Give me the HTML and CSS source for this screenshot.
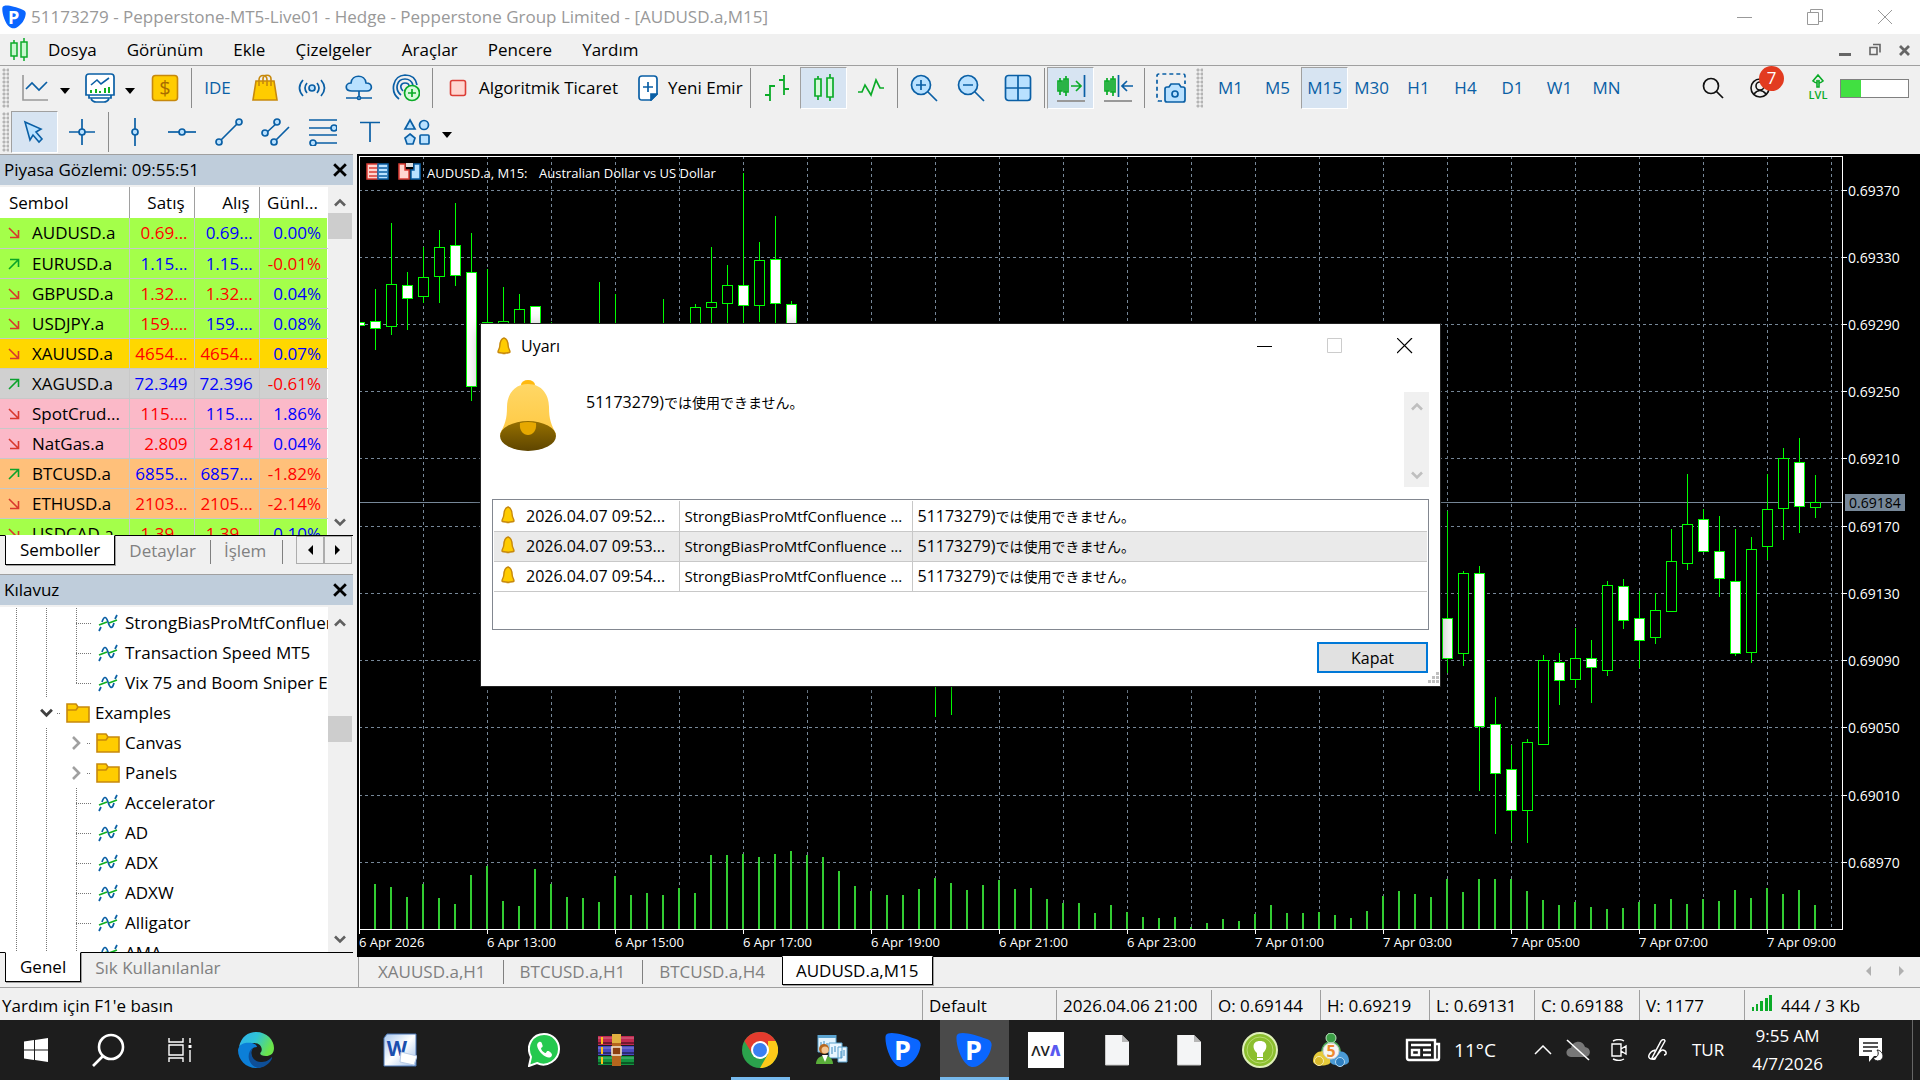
FILE: index.html
```html
<!DOCTYPE html>
<html lang="tr">
  <head>
    <meta charset="UTF-8" />
    <meta name="viewport" content="width=device-width, initial-scale=1.0" />
    <title>51173279 - Pepperstone-MT5-Live01</title>
    <link rel="stylesheet" href="styles.css" />
  </head>
  <body>
    <!-- Shared icons -->
    <svg class="defs" aria-hidden="true">
      <defs>
        <linearGradient id="bellBody" x1="0" y1="0" x2="0" y2="1">
          <stop offset="0" stop-color="#ffd766" />
          <stop offset="1" stop-color="#ffc63a" />
        </linearGradient>
        <linearGradient id="bellMouth" x1="0" y1="0" x2="0" y2="1">
          <stop offset="0" stop-color="#967000" />
          <stop offset="1" stop-color="#5e4500" />
        </linearGradient>
        <linearGradient id="edgeTop" x1="0" y1="0" x2="1" y2="0.4">
          <stop offset="0" stop-color="#2fb0ee" />
          <stop offset="0.5" stop-color="#2fc4d8" />
          <stop offset="1" stop-color="#6be44a" />
        </linearGradient>
        <linearGradient id="wordBg" x1="0" y1="0" x2="1" y2="1">
          <stop offset="0" stop-color="#a9c8ee" />
          <stop offset="0.5" stop-color="#ffffff" />
          <stop offset="1" stop-color="#9dbde8" />
        </linearGradient>
        <symbol id="pepper" viewBox="0 0 36 36">
          <path d="M3 1.500C8-.5 20 3 31 7c4 1.500 5 4 4.500 7-1 8-6 16-14 20-3 1.500-7 1.500-10-1C4 27 0 12 .5 5c0-2 1-3 2.500-3.500z" fill="#0a66ff" />
          <text x="9" y="28" class="logo-letter">P</text>
        </symbol>
        <symbol id="bell" viewBox="0 0 14 18">
          <path d="M7 1C3.500 2 3 5 2.800 9 2.600 12 1 13 1 15c1 1.500 11 1.500 12 0 0-2-1.600-3-1.800-6C11 5 10.500 2 7 1zM5.500 16.500h3" fill="#fc0" stroke="#c7890c" stroke-width="1.400" />
        </symbol>
        <symbol id="down" viewBox="0 0 12 12">
          <path d="M1 1l9 9M10.500 3v7.500H2" fill="none" stroke="#d9372c" stroke-width="1.600" />
        </symbol>
        <symbol id="up" viewBox="0 0 12 12">
          <path d="M1 11l9-9M2 1.500h8.500V9" fill="none" stroke="#0ba32a" stroke-width="1.600" />
        </symbol>
        <symbol id="caret" viewBox="0 0 10 6"><path d="M0 0h10L5 6z" /></symbol>
        <symbol id="chev-up" viewBox="0 0 12 9"><path d="M1 7.500l5-5 5 5" fill="none" stroke="currentColor" stroke-width="2.600" /></symbol>
        <symbol id="chev-down" viewBox="0 0 12 9"><path d="M1 1.500l5 5 5-5" fill="none" stroke="currentColor" stroke-width="2.600" /></symbol>
        <symbol id="cross" viewBox="0 0 12 12"><path d="M1 1l10 10M11 1L1 11" fill="none" stroke="currentColor" stroke-width="2.400" /></symbol>
        <symbol id="folder" viewBox="0 0 24 20">
          <path d="M1 1h9l2 3h11v15H1z" fill="#fc0" stroke="#c7890c" stroke-width="1.600" />
          <path d="M1 7h9l2-3" fill="none" stroke="#c7890c" stroke-width="1.600" />
        </symbol>
        <symbol id="indicator" viewBox="0 0 20 18">
          <path d="M1 17l2-4M4 8c2-6 4-6 6 0s4 8 6 1M17 5l2-4" fill="none" stroke="#0a5fa5" stroke-width="1.700" />
          <path d="M1 11l8-3M11 9l8-3" stroke="#10b020" stroke-width="1.700" />
        </symbol>
        <symbol id="page" viewBox="0 0 24 32">
          <path d="M0 1h17l7 7v23H0z" fill="#f4f5f6" />
          <path d="M17 1l7 7h-7z" fill="#b6b6b6" />
          <path d="M.5 1v30h23" fill="none" stroke="#c9c9c9" />
        </symbol>
      </defs>
    </svg>

    <!-- Title bar -->
    <header class="titlebar">
      <svg class="i24" width="24" height="24"><use href="#pepper" /></svg>
      <span class="title">51173279 - Pepperstone-MT5-Live01 - Hedge - Pepperstone Group Limited - [AUDUSD.a,M15]</span>
      <button class="win-btn" aria-label="Minimize"><svg width="16" height="16"><path d="M0 8.500h15" stroke="#999" /></svg></button>
      <button class="win-btn" aria-label="Restore"><svg width="16" height="16" fill="none" stroke="#999"><path d="M.5 3.500h11v12H.5zM3.500 3V.5h12v12H12" /></svg></button>
      <button class="win-btn" aria-label="Close"><svg width="16" height="16"><path d="M1 1l14 14M15 1L1 15" stroke="#999" /></svg></button>
    </header>

    <nav class="menubar">
      <svg width="18" height="24" fill="#c9f7cf" stroke="#0bab28" stroke-width="1.500"><path d="M4 2v20M14 0v23" /><path d="M1 5h6v13H1zM11 4h6v15h-6z" /></svg>
      <a href="#">Dosya</a>
      <a href="#">Görünüm</a>
      <a href="#">Ekle</a>
      <a href="#">Çizelgeler</a>
      <a href="#">Araçlar</a>
      <a href="#">Pencere</a>
      <a href="#">Yardım</a>
      <span class="mdi">
        <button aria-label="Minimize chart"><svg width="14" height="14"><path d="M1 11.500h12" stroke="#666" stroke-width="3" /></svg></button>
        <button aria-label="Restore chart"><svg width="14" height="14" fill="none" stroke="#666" stroke-width="1.600"><path d="M2 4.500h7v7H2zM5 1.500h7v8" /></svg></button>
        <button aria-label="Close chart"><svg width="14" height="14"><path d="M2 3l9 9M11 3l-9 9" stroke="#666" stroke-width="2.800" /></svg></button>
      </span>
    </nav>

    <!-- Toolbars -->
    <div class="toolbar">
      <span class="grip"></span>
      <button class="tool" aria-label="Line chart"><svg width="28" height="28" fill="none"><path d="M2 1v25h25" stroke="#999" stroke-width="1.600" /><path d="M5 15l6-6 7 7 8-8" stroke="#0a5fa5" stroke-width="1.700" /></svg></button>
      <button class="drop" aria-label="Chart menu"><svg width="10" height="6"><use href="#caret" /></svg></button>
      <button class="tool" aria-label="Indicators"><svg width="30" height="30" fill="none"><path d="M1 4q0-3 3-3h22q3 0 3 3v18H1zM4 22v3h22v-3M6 26q2 3 5 3h8q3 0 5-3" stroke="#0a5fa5" stroke-width="1.700" fill="#fff" /><path d="M6 12l6-5 4 4 8-6" stroke="#0a5fa5" stroke-width="1.600" /><path d="M6 20v-3M11 20v-4M15 20v-2M20 20v-5M24 20v-6" stroke="#10b020" stroke-width="2" /></svg></button>
      <button class="drop" aria-label="Indicator menu"><svg width="10" height="6"><use href="#caret" /></svg></button>
      <button class="tool" aria-label="Trade"><svg width="28" height="28"><rect x="1.500" y="1.500" width="25" height="25" rx="3" fill="#fc0" stroke="#c7890c" stroke-width="1.600" /><text x="14" y="21" text-anchor="middle" class="dollar">$</text></svg></button>
      <span class="sep"></span>
      <button class="tool ide">IDE</button>
      <button class="tool" aria-label="Market"><svg width="26" height="28" stroke="#c7890c" stroke-width="1.600"><path d="M4 7h18l3 19H1z" fill="#fc0" /><path d="M7 12V6c0-6 8-6 8 0v6M11 10V5c0-5 8-5 8 0v7" fill="none" /></svg></button>
      <button class="tool" aria-label="Signals"><svg width="28" height="20" fill="none" stroke="#0a5fa5" stroke-width="1.700"><circle cx="14" cy="10" r="3" fill="#b9e1ff" /><path d="M9 5q-4 5 0 10M5 2q-7 8 0 16M19 5q4 5 0 10M23 2q7 8 0 16" /></svg></button>
      <button class="tool" aria-label="VPS"><svg width="28" height="26" stroke="#0a5fa5" stroke-width="1.700"><path d="M7 16c-8 0-7-8-1-8C7-1 20-1 21 8c7 0 7 8 1 8z" fill="#b9e1ff" /><path d="M14 16v6M1 23h26" /><circle cx="14" cy="23" r="1.500" fill="#b9e1ff" /></svg></button>
      <button class="tool" aria-label="Copy trading"><svg width="28" height="28" fill="none" stroke="#0a5fa5" stroke-width="1.700"><path d="M7 25C-2 18 0 2 13 1c7 0 11 4 12 10M9 21C2 15 5 5 13 5c5 0 7 3 8 6M11 17C7 13 9 9 13 9c2 0 4 1 4 3" /><circle cx="20" cy="19" r="7.500" fill="#d7fadb" stroke="#0bab28" /><path d="M20 15v8M16 19h8" stroke="#0bab28" /></svg></button>
      <span class="sep"></span>
      <button class="text-tool algo"><svg width="18" height="18"><rect x="1.500" y="1.500" width="15" height="15" rx="2" fill="#ffd6d0" stroke="#dc3d35" stroke-width="1.600" /></svg>Algoritmik Ticaret</button>
      <button class="text-tool order"><svg width="20" height="26" stroke="#0a5fa5" stroke-width="1.700"><path d="M1 4q0-3 3-3h12q3 0 3 3v15l-6 6H4q-3 0-3-3z" fill="#fff" /><path d="M13 25v-6h6z" fill="#0a5fa5" /><path d="M10 7v10M5 12h10" /></svg>Yeni Emir</button>
      <span class="sep"></span>
      <button class="tool" aria-label="Bars"><svg width="28" height="28" fill="none" stroke="#0bab28" stroke-width="1.800"><path d="M7 11v16M2 21h5M7 12h5M21 1v20M16 6h5M21 15h5" /></svg></button>
      <button class="tool on" aria-label="Candles"><svg width="24" height="28" fill="#d7fadb" stroke="#0bab28" stroke-width="1.700"><path d="M6 2v24M18 0v27" /><path d="M3 5h6v17H3zM15 4h6v19h-6z" /></svg></button>
      <button class="tool" aria-label="Line"><svg width="28" height="20" fill="none" stroke="#0bab28" stroke-width="1.700"><path d="M1 14h4l3-7 6 10 5-15 4 8h4" /></svg></button>
      <span class="sep"></span>
      <button class="tool" aria-label="Zoom in"><svg width="28" height="28" stroke="#0a5fa5" stroke-width="1.700"><circle cx="11" cy="11" r="9.500" fill="#b9e1ff" /><path d="M11 6v10M6 11h10M18 18l9 9" /></svg></button>
      <button class="tool" aria-label="Zoom out"><svg width="28" height="28" stroke="#0a5fa5" stroke-width="1.700"><circle cx="11" cy="11" r="9.500" fill="#b9e1ff" /><path d="M6 11h10M18 18l9 9" /></svg></button>
      <button class="tool" aria-label="Tile windows"><svg width="28" height="28" stroke="#0a5fa5" stroke-width="1.700"><rect x="1.500" y="1.500" width="25" height="25" rx="3" fill="#b9e1ff" /><path d="M14 1v26M1 14h26" /></svg></button>
      <span class="sep"></span>
      <button class="tool on" aria-label="Auto scroll"><svg width="30" height="28" fill="none" stroke-width="1.700"><path d="M4 4v17M10 2v20M2 7h4v10H2zM8 5h4v13H8zM15 12h9M20 7l5 5-5 5" stroke="#0bab28" /><path d="M28.500 1v22" stroke="#0a5fa5" /><path d="M1 27h28" stroke="#999" stroke-width="2" /></svg></button>
      <button class="tool" aria-label="Chart shift"><svg width="30" height="28" fill="none" stroke-width="1.700"><path d="M4 4v17M10 2v20M2 7h4v10H2zM8 5h4v13H8z" stroke="#0bab28" /><path d="M15.500 1v22M19 12h11M24 7l-5 5 5 5" stroke="#0a5fa5" /><path d="M1 27h28" stroke="#999" stroke-width="2" /></svg></button>
      <span class="sep"></span>
      <button class="tool" aria-label="Screenshot"><svg width="30" height="30" fill="none" stroke="#0a5fa5" stroke-width="1.700"><path d="M6 28H3q-2 0-2-2V3q0-2 2-2h24q2 0 2 2v8" stroke-dasharray="4 3" /><path d="M9 16q0-2 2-2h2l2-3h8l2 3h2q2 0 2 2v11q0 2-2 2H11q-2 0-2-2z" fill="#b9e1ff" /><circle cx="19" cy="21" r="3" /></svg></button>
      <span class="grip"></span>
      <button class="tool period">M1</button>
      <button class="tool period">M5</button>
      <button class="tool period on">M15</button>
      <button class="tool period">M30</button>
      <button class="tool period">H1</button>
      <button class="tool period">H4</button>
      <button class="tool period">D1</button>
      <button class="tool period">W1</button>
      <button class="tool period">MN</button>
      <div class="account">
        <button aria-label="Search"><svg width="22" height="22" fill="none" stroke="#111" stroke-width="1.700"><circle cx="9" cy="9" r="7.500" /><path d="M14 14l7 7" /></svg></button>
        <button class="user" aria-label="Account"><svg width="20" height="20" fill="none" stroke="#111" stroke-width="1.600"><circle cx="10" cy="10" r="9" /><circle cx="10" cy="8" r="4" /><path d="M4 16q6-7 12 0" /></svg><span class="badge">7</span></button>
        <svg class="lvl" width="26" height="30"><path d="M13 2l5 6q-5 4-4-1v7h-2V7q1 5-4 1z" fill="none" stroke="#0bab28" stroke-width="1.600" /><text x="13" y="26" text-anchor="middle">LVL</text></svg>
        <span class="meter"><span></span></span>
      </div>
    </div>
    <div class="toolbar">
      <span class="grip"></span>
      <button class="tool on" aria-label="Cursor"><svg width="24" height="24" fill="#b9e1ff" stroke="#0a5fa5" stroke-width="1.600"><path d="M2 2l16 7-5 3 6 7-3 3-6-7-3 5z" /></svg></button>
      <button class="tool" aria-label="Crosshair"><svg width="26" height="26" fill="#b9e1ff" stroke="#0a5fa5" stroke-width="1.700"><path d="M13 0v26M0 13h26" /><circle cx="13" cy="13" r="3" /></svg></button>
      <span class="sep"></span>
      <button class="tool" aria-label="Vertical line"><svg width="10" height="28" fill="#b9e1ff" stroke="#0a5fa5" stroke-width="1.700"><path d="M5 0v28" /><circle cx="5" cy="14" r="3" /></svg></button>
      <button class="tool" aria-label="Horizontal line"><svg width="28" height="10" fill="#b9e1ff" stroke="#0a5fa5" stroke-width="1.700"><path d="M0 5h28" /><circle cx="14" cy="5" r="3" /></svg></button>
      <button class="tool" aria-label="Trend line"><svg width="28" height="28" fill="#b9e1ff" stroke="#0a5fa5" stroke-width="1.700"><path d="M4 24L24 4" /><circle cx="4" cy="24" r="3" /><circle cx="24" cy="4" r="3" /></svg></button>
      <button class="tool" aria-label="Channel"><svg width="30" height="28" fill="#b9e1ff" stroke="#0a5fa5" stroke-width="1.700"><path d="M4 16L17 4M13 24l15-15" /><circle cx="4" cy="15" r="3" /><circle cx="16" cy="4" r="3" /><circle cx="13" cy="24" r="3" /></svg></button>
      <button class="tool" aria-label="Fibonacci"><svg width="28" height="28" fill="#b9e1ff" stroke="#0a5fa5" stroke-width="1.700"><path d="M0 2h28M0 10h28M0 17h28M4 25h24" /><circle cx="25" cy="10" r="3" /><circle cx="4" cy="25" r="3" /></svg></button>
      <button class="tool" aria-label="Text"><svg width="20" height="22"><path d="M0 1.500h20M10 1v20" stroke="#0a5fa5" stroke-width="1.700" /></svg></button>
      <button class="tool" aria-label="Shapes"><svg width="28" height="28" fill="#b9e1ff" stroke="#0a5fa5" stroke-width="1.700"><path d="M7 2l5 9H2zM7 16l5 4-2 6H4l-2-6z" /><circle cx="21" cy="7" r="4.500" /><rect x="17" y="17" width="9" height="9" rx="1" /></svg></button>
      <button class="drop" aria-label="Shape menu"><svg width="10" height="6"><use href="#caret" /></svg></button>
    </div>

    <main class="workspace">
      <aside class="sidebar">
        <section class="panel market">
          <h2 class="panel-head">Piyasa Gözlemi: 09:55:51 <button aria-label="Close"><svg width="14" height="14"><use href="#cross" /></svg></button></h2>
          <div class="panel-body">
            <table class="quotes">
              <thead>
                <tr><th>Sembol</th><th>Satış</th><th>Alış</th><th>Günl...</th></tr>
              </thead>
              <tbody id="quotes"></tbody>
            </table>
            <div class="scroll">
              <svg width="12" height="9"><use href="#chev-up" /></svg>
              <span class="thumb"></span>
              <svg width="12" height="9"><use href="#chev-down" /></svg>
            </div>
          </div>
          <div class="tabs">
            <button class="tab active">Semboller</button>
            <button class="tab">Detaylar</button>
            <button class="tab">İşlem</button>
            <span class="tab-arrows">
              <button aria-label="Left"><svg width="6" height="10"><path d="M6 0v10L1 5z" /></svg></button>
              <button aria-label="Right"><svg width="6" height="10"><path d="M0 0v10l5-5z" /></svg></button>
            </span>
          </div>
        </section>
        <section class="panel navigator">
          <h2 class="panel-head">Kılavuz <button aria-label="Close"><svg width="14" height="14"><use href="#cross" /></svg></button></h2>
          <div class="panel-body">
            <ul class="tree" id="tree"></ul>
            <div class="scroll low">
              <svg width="12" height="9"><use href="#chev-up" /></svg>
              <span class="thumb"></span>
              <svg width="12" height="9"><use href="#chev-down" /></svg>
            </div>
          </div>
          <div class="tabs">
            <button class="tab active">Genel</button>
            <button class="tab">Sık Kullanılanlar</button>
          </div>
        </section>
      </aside>

      <section class="chart-area">
        <svg class="chart" id="chart" viewBox="357 154 1563 803" preserveAspectRatio="none"></svg>
        <div class="chart-tabs">
          <button class="ctab">XAUUSD.a,H1</button>
          <button class="ctab">BTCUSD.a,H1</button>
          <button class="ctab">BTCUSD.a,H4</button>
          <button class="ctab active">AUDUSD.a,M15</button>
          <span class="ctab-arrows">
            <svg width="6" height="10"><path d="M5 0v10L0 5z" /></svg>
            <svg width="6" height="10"><path d="M1 0v10l5-5z" /></svg>
          </span>
        </div>
      </section>
    </main>

    <footer class="status">
      <span class="help">Yardım için F1'e basın</span>
      <span class="profile">Default</span>
      <span class="time">2026.04.06 21:00</span>
      <span class="open-high">O: 0.69144</span>
      <span class="open-high">H: 0.69219</span>
      <span class="low-close">L: 0.69131</span>
      <span class="low-close">C: 0.69188</span>
      <span class="low-close">V: 1177</span>
      <span class="net"><svg width="22" height="18" fill="#0bab28"><path d="M1 13h2v4H1zM5 10h2v7H5zM9 7h3v10H9zM14 4h3v13h-3zM18 1h3v16h-3z" /></svg>444 / 3 Kb</span>
    </footer>

    <!-- Windows taskbar -->
    <div class="taskbar">
      <div class="start">
        <button aria-label="Start"><svg width="24" height="24" fill="#fff"><path d="M0 3.500L10 2v9.500H0zM11 2l13-2v11.500H11zM0 12.500h10V22L0 20.500zM11 12.500h13V24l-13-2z" /></svg></button>
        <button aria-label="Search"><svg width="34" height="34" fill="none" stroke="#fff" stroke-width="2.600"><circle cx="20" cy="14" r="12" /><path d="M12 23L2 33" /></svg></button>
        <button aria-label="Task view"><svg width="24" height="24" fill="none" stroke="#fff" stroke-width="1.400"><path d="M1 0v4h14V0M1 7h14v10H1zM1 24v-4h14v4M22 0v5M22 12v12" /><path d="M20.500 7h3v3h-3z" fill="#fff" stroke="none" /></svg></button>
      </div>
      <div class="apps">
        <button aria-label="Edge"><svg width="36" height="36"><path d="M1 15C3 5 10 0 18 0c11 0 18 8 18 16 0 6-4 8-8 8-5 0-7-2-5-4 2-3 0-9-7-9-7 0-13 2-15 4z" fill="url(#edgeTop)" /><path d="M0 18c1-7 9-8 14-7 4 1 5 3 5 4-6 0-7 6-5 10 2 6 9 11 16 5-3 4-8 6-12 6C8 36 0 28 0 18z" fill="#0c7fd8" /><path d="M16 15c-6 6-1 16 8 15 5 0 8-3 10-5 1 2-5 11-14 11-10-2-13-16-4-21z" fill="#0e4f98" /></svg></button>
        <i></i>
        <button aria-label="Word"><svg width="34" height="34"><path d="M4 1h29v32H1V5z" fill="url(#wordBg)" stroke="#4c79b8" /><text x="14" y="23" text-anchor="middle" class="word">W</text><path d="M18 19l16 4-3 9-14-3z" fill="#fff" stroke="#b8cbe6" /></svg></button>
        <i></i>
        <button aria-label="WhatsApp"><svg width="32" height="34"><path d="M1 33l2-9C-3 12 5 1 16 1c9 0 15 7 15 15 0 11-12 19-22 14z" fill="#25c94f" stroke="#fff" stroke-width="2" /><path d="M11 9c-4 2-1 8 3 12s9 5 10 1c0-2-3-4-4-4-2 0-1 2-3 2-2-1-4-3-4-5 2-1 2-2 1-4 0-1-1-3-3-2z" fill="#fff" /></svg></button>
        <button aria-label="WinRAR"><svg width="36" height="32"><path d="M0 2h36v9H0z" fill="#c0294f" /><path d="M0 12h36v9H0z" fill="#4a4ac0" /><path d="M0 22h36v9H0z" fill="#12933f" /><path d="M0 4h36M0 14h36M0 24h36" stroke="#fff" stroke-opacity=".35" /><path d="M0 9h36M0 19h36M0 29h36" stroke="#000" stroke-opacity=".4" stroke-width="2" /><path d="M3 3h2v7H3zM3 13h2v7H3zM3 23h2v7H3z" fill="#ffc21a" /><path d="M14 1h9v31h-9z" fill="#b5651d" /><path d="M14 0h9v9h-9z" fill="#e0b040" /><rect x="14" y="13" width="9" height="8" fill="#8b3f10" stroke="#f0e0c8" stroke-width="1.600" /></svg></button>
        <i></i>
        <button class="open" aria-label="Chrome"><svg width="36" height="36"><circle cx="18" cy="18" r="18" fill="#2ba24c" /><path d="M18 18L2.400 9A18 18 0 0 1 33.600 9z" fill="#e33b2e" /><path d="M2.400 9L11 23l7-14z" fill="#e33b2e" /><path d="M33.600 9A18 18 0 0 1 18 36l8-14V9z" fill="#fdc919" /><circle cx="18" cy="18" r="9" fill="#fff" /><circle cx="18" cy="18" r="7" fill="#3a7ff0" /></svg></button>
        <button aria-label="Manager"><svg width="32" height="30"><path d="M2 0h18v17H2z" fill="#e3f3fd" stroke="#5ba3cf" /><path d="M2 0h18v3H2z" fill="#5ba3cf" /><path d="M13 8h13v15H13zM22 12h9v15h-9z" fill="#eaf6ff" stroke="#5ba3cf" /><path d="M5 7v6M8 6v7M11 8v4M16 12v7M19 11v6M25 16v7M28 15v6" stroke="#3a8ac0" /><circle cx="8" cy="14" r="5" fill="#b5651d" /><circle cx="9" cy="15" r="3.500" fill="#f3c592" /><path d="M0 29c0-11 17-11 17 0z" fill="#5aae3a" /><path d="M6 20l3 7 3-7z" fill="#fff" /></svg></button>
        <button aria-label="Pepperstone"><svg width="36" height="36"><use href="#pepper" /></svg></button>
        <button class="open current" aria-label="Pepperstone MT5"><svg width="36" height="36"><use href="#pepper" /></svg></button>
        <button aria-label="AVA"><span class="ava">ΛV<b>Λ</b></span></button>
        <button aria-label="Document"><svg width="24" height="32"><use href="#page" /></svg></button>
        <button aria-label="Document 2"><svg width="24" height="32"><use href="#page" /></svg></button>
        <button aria-label="Idea"><svg width="36" height="36"><circle cx="18" cy="18" r="17" fill="#8cbf2f" stroke="#dff0b8" stroke-width="2" /><circle cx="18" cy="18" r="13" fill="none" stroke="#b9dc70" /><path d="M18 9c-9 0-7 9-3 12v4h6v-4c4-3 6-12-3-12zM15 26h6v2h-6z" fill="#fff" /></svg></button>
        <button aria-label="MetaTrader 5"><svg width="36" height="34"><path d="M8 20C8 4 28 4 28 20z" fill="#4cab55" /><circle cx="18" cy="5" r="5" fill="#3b9e45" stroke="#bfe6c2" /><path d="M0 28c0-13 18-13 18 0 0 6-18 6-18 0z" fill="#e6cb3a" /><circle cx="6" cy="28" r="4.500" fill="#d9b92c" stroke="#f6ecb0" /><path d="M17 28c0-13 19-13 19 0 0 6-19 6-19 0z" fill="#4b9bd6" /><circle cx="27" cy="29" r="4.500" fill="#2f7fc0" stroke="#b5d9f2" /><circle cx="18" cy="18" r="8" fill="#f6f6f4" stroke="#ccc" /><text x="18" y="24" text-anchor="middle" class="five">5</text></svg></button>
      </div>
      <div class="tray">
        <span class="weather"><svg width="36" height="24" fill="none" stroke="#fff" stroke-width="2.400"><path d="M2 2h28v18q0 2 2 2H4q-2 0-2-2zM30 6h4v14q0 2-2 2" /><path d="M6 7h20M18 12h8M18 17h8M7 12h7v5H7z" /></svg>11°C</span>
        <svg class="more" width="18" height="10"><path d="M1 9l8-8 8 8" fill="none" stroke="#fff" stroke-width="1.500" /></svg>
        <svg width="24" height="22"><path d="M5 18c-7-1-5-9 0-9C7 1 17 1 19 8c7 1 6 10 0 10z" fill="#777" /><path d="M1 1l22 20" stroke="#fff" stroke-width="1.600" /></svg>
        <svg width="18" height="22" fill="none" stroke="#fff" stroke-width="1.400"><path d="M2 5h9v12H2zM11 10l5-3v8l-5-3M3 2q6-3 11 0M3 20q6 3 11 0" /></svg>
        <svg width="20" height="22" fill="none" stroke="#fff" stroke-width="1.500"><path d="M13 2q3-3 4 0L7 20q-3 1-3-1zM9 11c-7 0-11 8-6 9 6 1 8-10 12-9s4 5 1 5" /></svg>
        <span class="lang">TUR</span>
        <time>9:55 AM<br />4/7/2026</time>
        <svg class="note" width="26" height="26"><path d="M1 1h23v18h-8l-5 6v-6H1z" fill="#fff" /><path d="M5 6h15M5 10h15M5 14h9" stroke="#1d1d1d" stroke-width="1.400" /><path d="M19 13c3 4 0 8-4 8 3 5 10 3 10-2 0-3-3-6-6-6z" fill="#fff" stroke="#1d1d1d" /></svg>
      </div>
    </div>

    <!-- Alert window -->
    <div class="alert" role="dialog" aria-label="Uyarı">
      <div class="alert-title">
        <svg width="14" height="18"><use href="#bell" /></svg>
        <span>Uyarı</span>
        <button aria-label="Minimize"><svg width="16" height="16"><path d="M0 8.500h15" stroke="#000" /></svg></button>
        <button aria-label="Maximize" disabled><svg width="16" height="16"><path d="M.5.5h14v14H.5z" fill="none" stroke="#ccc" /></svg></button>
        <button aria-label="Close"><svg width="16" height="16"><path d="M0 0l15 15M15 0L0 15" stroke="#000" stroke-width="1.200" /></svg></button>
      </div>
      <div class="alert-message">
        <svg width="56" height="72">
          <ellipse cx="28" cy="5" rx="7" ry="5" fill="#ffb90f" />
          <path d="M28 4C14 4 7 15 7 27c0 12-2 17-7 27 10 16 46 16 56 0-5-10-7-15-7-27C49 15 42 4 28 4z" fill="url(#bellBody)" />
          <ellipse cx="28" cy="56" rx="28" ry="15" fill="url(#bellMouth)" />
          <path d="M20 43q8-2 16 0c2 16-18 16-16 0z" fill="#e6a800" />
        </svg>
        <p>51173279)<span class="jp">では使用できません。</span></p>
        <div class="scroll idle">
          <svg width="12" height="9"><use href="#chev-up" /></svg>
          <svg width="12" height="9"><use href="#chev-down" /></svg>
        </div>
      </div>
      <div class="alert-list">
        <table>
          <tr>
            <td><svg width="14" height="18"><use href="#bell" /></svg>2026.04.07 09:52...</td>
            <td>StrongBiasProMtfConfluence ...</td>
            <td>51173279)<span class="jp">では使用できません。</span></td>
          </tr>
          <tr>
            <td><svg width="14" height="18"><use href="#bell" /></svg>2026.04.07 09:53...</td>
            <td>StrongBiasProMtfConfluence ...</td>
            <td>51173279)<span class="jp">では使用できません。</span></td>
          </tr>
          <tr>
            <td><svg width="14" height="18"><use href="#bell" /></svg>2026.04.07 09:54...</td>
            <td>StrongBiasProMtfConfluence ...</td>
            <td>51173279)<span class="jp">では使用できません。</span></td>
          </tr>
        </table>
      </div>
      <div class="alert-foot">
        <button class="close-btn">Kapat</button>
        <svg width="12" height="12" fill="#bfbfbf"><path d="M8 0h3v3H8zM4 4h3v3H4zM8 4h3v3H8zM0 8h3v3H0zM4 8h3v3H4zM8 8h3v3H8z" /></svg>
      </div>
    </div>

    <script src="script.js"></script>
  </body>
</html>
```

FILE: styles.css
```css
* {
  box-sizing: border-box;
}

body {
  margin: 0;
  height: 100vh;
  display: flex;
  flex-direction: column;
  overflow: hidden;
  position: relative;
  background: #f0f0f0;
  color: #000;
  font-family: "Open Sans", "Noto Sans", "Noto Sans CJK JP", sans-serif;
  font-size: 17px;
  line-height: 24px;
}

button {
  padding: 0;
  border: none;
  background: none;
  font: inherit;
  color: inherit;
}

svg {
  display: block;
  flex: none;
}

.defs {
  position: absolute;
  width: 0;
  height: 0;
}

.logo-letter {
  font: bold 27px "Open Sans", sans-serif;
  fill: #fff;
}

/* Title and menu */
.titlebar {
  display: flex;
  align-items: center;
  height: 34px;
  padding-left: 2px;
  background: #fff;
  color: #999;
}

.title {
  flex: 1;
  margin-left: 5px;
  white-space: nowrap;
}

.win-btn {
  width: 70px;
  display: flex;
  justify-content: center;
}

.menubar {
  display: flex;
  align-items: center;
  height: 32px;
  padding-left: 10px;
  border-bottom: 1px solid #a0a0a0;
}

.menubar a {
  margin-left: 30px;
  color: #000;
  text-decoration: none;
}

.menubar a:first-of-type {
  margin-left: 20px;
}

.mdi {
  margin-left: auto;
  margin-right: 8px;
  display: flex;
  gap: 16px;
}

/* Toolbars */
.toolbar {
  display: flex;
  align-items: center;
  height: 44px;
  padding: 1px 0;
}

.grip {
  width: 11px;
  height: 40px;
  background: radial-gradient(circle, #b4b4b4 1px, transparent 2px) 2px 0 / 4px 4px;
  background-clip: content-box;
  padding: 0 2px;
}

.tool + .grip {
  width: 13px;
  padding-right: 4px;
}

.tool {
  width: 47px;
  height: 42px;
  display: flex;
  align-items: center;
  justify-content: center;
  border: 1px solid transparent;
}

.tool.on {
  background: #d7e4f2;
  border-color: #a0a0a0 #fff #fff #a0a0a0;
}

.drop {
  width: 18px;
  height: 42px;
  padding: 6px 0 0 2px;
}

.sep {
  width: 6px;
  height: 40px;
  background: linear-gradient(#8c8c8c, #8c8c8c) 3px 0 / 1px 100% no-repeat;
}

.ide,
.period {
  color: #0a5fa5;
}

.dollar {
  font: 20px "Open Sans", sans-serif;
  fill: #a86c00;
}

.text-tool {
  display: flex;
  align-items: center;
  gap: 12px;
  padding-left: 14px;
  white-space: nowrap;
}

.algo {
  width: 189px;
}

.order {
  width: 123px;
  gap: 10px;
}

.account {
  margin-left: auto;
  margin-right: 11px;
  display: flex;
  align-items: center;
  gap: 26px;
}

.user {
  position: relative;
  margin-right: 9px;
}

.badge {
  position: absolute;
  left: 9px;
  top: -12px;
  width: 25px;
  height: 25px;
  border-radius: 50%;
  background: #e23b20;
  color: #fff;
  text-align: center;
}

.lvl {
  margin-right: -17px;
}

.lvl text {
  font: 600 11px "Open Sans", sans-serif;
  fill: #0bab28;
}

.meter {
  width: 69px;
  height: 19px;
  border: 1px solid #808080;
  background: #fff;
}

.meter span {
  display: block;
  width: 30%;
  height: 100%;
  background: #41e041;
}

/* Workspace */
.workspace {
  flex: 1;
  min-height: 0;
  display: flex;
}

.sidebar {
  width: 353px;
  margin-right: 4px;
  display: flex;
  flex-direction: column;
}

.panel {
  display: flex;
  flex-direction: column;
  min-height: 0;
}

.market {
  height: 420px;
}

.navigator {
  flex: 1;
}

.panel-head {
  display: flex;
  align-items: center;
  justify-content: space-between;
  height: 31px;
  margin: 0 0 2px;
  padding: 0 6px 0 4px;
  border-top: 1px solid #a0a0a0;
  background: #bfcddb;
  font-size: 17px;
  font-weight: normal;
}

.panel-body {
  flex: 1;
  min-height: 0;
  display: flex;
  overflow: hidden;
}

.quotes {
  flex: 1;
  align-self: flex-start;
  table-layout: fixed;
  border-collapse: collapse;
  background: #fff;
}

.quotes th,
.quotes td {
  height: 30px;
  padding: 1px 6px 0 5px;
  border-right: 1px solid #c8c8c8;
  border-bottom: 1px solid #c8c8c8;
  text-align: right;
  font-weight: normal;
  white-space: nowrap;
}

.quotes th {
  height: 31px;
  padding-right: 9px;
  border-right-color: #a0a0a0;
  border-bottom: none;
}

.quotes th:first-child {
  width: 129px;
  padding-left: 9px;
  text-align: left;
}

.quotes th:nth-child(2),
.quotes th:nth-child(3) {
  width: 65px;
}

.quotes th:last-child,
.quotes td:last-child {
  border-right-color: #fff;
}

.quotes .sym {
  padding: 1px 0 0;
}

.sym div {
  display: flex;
  align-items: center;
  gap: 12px;
  padding-left: 8px;
}

.green { background: #a4ff4a; }
.gold { background: #ffd700; }
.silver { background: #d0d0d0; }
.pink { background: #fbb9c8; }
.orange { background: #ffc07a; }

.dn { color: #f00; }
.hi { color: #00f; }

.scroll {
  width: 24px;
  margin-right: 1px;
  padding: 11px 0 8px;
  display: flex;
  flex-direction: column;
  align-items: center;
  justify-content: space-between;
  color: #606060;
}

.thumb {
  width: 100%;
  height: 26px;
  margin-top: 6px;
  margin-bottom: auto;
  background: #cdcdcd;
}

.scroll.low .thumb {
  margin-top: 89px;
}

.tabs {
  display: flex;
  align-items: flex-start;
  height: 39px;
  border-top: 1px solid #000;
  color: #808080;
}

.navigator .tabs {
  height: 35px;
}

.tab {
  height: 30px;
  padding: 0 14px;
}

.tab + .tab:not(:nth-child(2)),
.tab + .tab-arrows {
  background: linear-gradient(#808080, #808080) 0 4px / 1px 24px no-repeat;
}

.tab.active,
.ctab.active {
  margin: -1px 0 0 5px;
  border: 1px solid #000;
  border-top-color: #fff;
  background: #fff;
  color: #000;
  box-shadow: 1px 1px 0 #a0a0a0;
}

.tab-arrows {
  margin-left: auto;
  padding-left: 14px;
  margin-right: 1px;
  display: flex;
}

.tab-arrows button {
  width: 28px;
  height: 28px;
  display: flex;
  align-items: center;
  justify-content: center;
  border: 1px solid #adadad;
}

.tree {
  flex: 1;
  min-width: 0;
  margin: 0;
  padding: 0 0 0 1px;
  list-style: none;
  overflow: hidden;
  background: #fff;
}

.tree li {
  display: flex;
  align-items: center;
  height: 30px;
  padding-top: 1px;
  white-space: nowrap;
}

.guide {
  width: 30px;
  height: 30px;
  flex: none;
  display: flex;
  align-items: center;
  justify-content: center;
  background: repeating-linear-gradient(#777 0 1px, transparent 1px 2px) 15px 0 / 1px 100% no-repeat;
}

.guide.leaf,
.guide.last {
  background:
    repeating-linear-gradient(#777 0 1px, transparent 1px 2px) 15px 0 / 1px 100% no-repeat,
    repeating-linear-gradient(90deg, #777 0 1px, transparent 1px 2px) 15px 15px / 15px 1px no-repeat;
}

.guide.last {
  background-size: 1px 15px, 15px 1px;
}

.guide.fold {
  background: repeating-linear-gradient(90deg, #777 0 1px, transparent 1px 2px) 26px 15px / 4px 1px no-repeat;
  color: #404040;
}

.guide.closed {
  color: #a0a0a0;
}

.node-icon {
  width: 34px;
  flex: none;
  display: flex;
  justify-content: center;
}

/* Chart */
.chart-area {
  flex: 1;
  min-width: 0;
  display: flex;
  flex-direction: column;
}

.chart {
  flex: 1;
  min-height: 0;
  width: 100%;
  background: #000;
}

.chart rect,
.chart line {
  shape-rendering: crispEdges;
}

.chart text {
  font: 14px "Open Sans", "Noto Sans", sans-serif;
  fill: #fff;
}

.chart .caption {
  font-size: 13px;
}

.chart .tag {
  fill: #000;
}

.chart-tabs {
  display: flex;
  align-items: flex-start;
  height: 30px;
  margin-left: 1px;
  padding-left: 2px;
  border-left: 1px solid #a0a0a0;
  color: #808080;
}

.ctab {
  height: 29px;
  padding: 0 17px;
}

.ctab + .ctab:not(.active) {
  background: linear-gradient(#808080, #808080) 0 3px / 1px 24px no-repeat;
}

.ctab.active {
  margin: -1px 0 0;
  padding: 0 13px;
}

.ctab-arrows {
  margin: 9px 16px 0 auto;
  display: flex;
  gap: 26px;
  fill: #b0b0b0;
}

/* Status bar */
.status {
  display: flex;
  height: 33px;
  padding-top: 2px;
  border-top: 1px solid #a0a0a0;
  line-height: 32px;
}

.status span {
  padding-left: 6px;
  border-left: 1px solid #a0a0a0;
  white-space: nowrap;
}

.status .help {
  flex: 1;
  padding-left: 2px;
  border-left: none;
}

.status .profile { width: 134px; }
.status .time { width: 155px; }
.status .open-high { width: 109px; }
.status .low-close { width: 105px; }

.status .net {
  width: 176px;
  display: flex;
  gap: 8px;
}

.net svg {
  margin-top: 4px;
}

/* Taskbar */
.taskbar {
  display: flex;
  height: 60px;
  background: #1d1d1d;
  color: #fff;
}

.start {
  display: flex;
  margin-right: 4px;
}

.start button {
  width: 72px;
  display: flex;
  align-items: center;
  justify-content: center;
}

.apps {
  width: 1147px;
  display: grid;
  grid-template-columns: 1fr 73px 1fr 73px 1fr 1fr 73px repeat(9, 1fr);
}

.apps button {
  display: flex;
  align-items: center;
  justify-content: center;
}

.apps .open {
  margin: 0 6px;
  border-bottom: 3px solid #76b9ed;
  padding-top: 3px;
}

.apps .current {
  margin: 0 1px;
  background: #4a4a4a;
}

.word {
  font: bold 21px "Open Sans", sans-serif;
  fill: #1b4fae;
}

.five {
  font: bold 16px "Open Sans", sans-serif;
  fill: #ee8a2e;
}

.ava {
  width: 36px;
  height: 36px;
  background: #fff;
  color: #222;
  font-size: 15px;
  font-weight: 600;
  line-height: 36px;
}

.ava b {
  color: #5a5af0;
}

.tray {
  flex: 1;
  display: flex;
  align-items: center;
  justify-content: flex-end;
  gap: 20px;
  margin-right: 7px;
  padding-right: 28px;
  border-right: 1px solid #666;
}

.weather {
  display: flex;
  align-items: center;
  gap: 13px;
  margin-right: 18px;
  font-size: 19px;
}

.tray .more {
  margin-right: -6px;
}

.tray .lang {
  margin-left: 4px;
}

.tray time {
  margin: 0 15px 0 8px;
  line-height: 28px;
  text-align: center;
}

/* Alert window, floats above the chart */
.alert {
  position: absolute;
  left: 481px;
  top: 324px;
  width: 959px;
  height: 362px;
  display: flex;
  flex-direction: column;
  background: #fff;
  box-shadow: 0 0 0 1px #222, 0 4px 16px rgba(0, 0, 0, 0.4);
  font-size: 16px;
}

.alert-title {
  display: flex;
  align-items: center;
  height: 44px;
  padding-left: 16px;
}

.alert-title span {
  flex: 1;
  margin-left: 10px;
}

.alert-title button {
  width: 70px;
  display: flex;
  justify-content: center;
}

.alert-message {
  display: flex;
  height: 131px;
  padding: 12px 11px 0 19px;
}

.alert-message p {
  flex: 1;
  margin: 10px 0 0 30px;
}

.jp {
  font-family: "Noto Sans CJK JP", sans-serif;
  font-size: 14px;
  line-height: 20px;
}

.scroll.idle {
  width: 25px;
  height: 95px;
  margin: 12px 0 0;
  padding: 10px 0 7px;
  background: #f0f0f0;
  color: #bfbfbf;
}

.alert-list {
  height: 131px;
  margin: 0 11px;
  padding: 1px;
  border: 1px solid #828790;
}

.alert-list table {
  width: 100%;
  table-layout: fixed;
  border-collapse: collapse;
}

.alert-list td {
  height: 30px;
  padding: 0 5px;
  border-bottom: 1px solid #c8c8c8;
  border-right: 1px solid #c8c8c8;
  white-space: nowrap;
}

.alert-list td:first-child {
  width: 185px;
  padding-left: 7px;
}

.alert-list td:nth-child(2) {
  width: 233px;
  font-size: 15px;
}

.alert-list td:last-child {
  border-right: none;
}

.alert-list td svg {
  float: left;
  margin: 2px 11px 0 0;
}

.alert-list tr:nth-child(2) {
  background: #eaeaea;
}

.alert-foot {
  flex: 1;
  display: flex;
  align-items: flex-end;
  justify-content: flex-end;
  padding-bottom: 2px;
}

.close-btn {
  width: 111px;
  height: 31px;
  margin-bottom: 11px;
  border: 2px solid #0078d7;
  background: #e1e1e1;
}
```

FILE: script.js
```js
const svg = (id, w, h) => `<svg width="${w}" height="${h}"><use href="#${id}" /></svg>`;

// Market watch rows: symbol, direction, row color, bid, ask, daily change
const quotes = [
  ["AUDUSD.a", "down", "green", "0.69...", "0.69...", "0.00%", "dn", "hi", "hi"],
  ["EURUSD.a", "up", "green", "1.15...", "1.15...", "-0.01%", "hi", "hi", "dn"],
  ["GBPUSD.a", "down", "green", "1.32...", "1.32...", "0.04%", "dn", "dn", "hi"],
  ["USDJPY.a", "down", "green", "159....", "159....", "0.08%", "dn", "hi", "hi"],
  ["XAUUSD.a", "down", "gold", "4654...", "4654...", "0.07%", "dn", "dn", "hi"],
  ["XAGUSD.a", "up", "silver", "72.349", "72.396", "-0.61%", "hi", "hi", "dn"],
  ["SpotCrud...", "down", "pink", "115....", "115....", "1.86%", "dn", "hi", "hi"],
  ["NatGas.a", "down", "pink", "2.809", "2.814", "0.04%", "dn", "dn", "hi"],
  ["BTCUSD.a", "up", "orange", "6855...", "6857...", "-1.82%", "hi", "hi", "dn"],
  ["ETHUSD.a", "down", "orange", "2103...", "2105...", "-2.14%", "dn", "dn", "dn"],
  ["USDCAD.a", "down", "green", "1.39...", "1.39...", "0.10%", "dn", "dn", "hi"],
];

document.getElementById("quotes").innerHTML = quotes
  .map(
    ([name, dir, color, bid, ask, day, c1, c2, c3]) => `<tr class="${color}">
      <td class="sym"><div>${svg(dir, 12, 12)}${name}</div></td>
      <td class="${c1}">${bid}</td><td class="${c2}">${ask}</td><td class="${c3}">${day}</td></tr>`
  )
  .join("");

// Navigator tree: label and kind of node
const nodes = [
  ["StrongBiasProMtfConfluence", "leaf"],
  ["Transaction Speed MT5", "leaf"],
  ["Vix 75 and Boom Sniper Entry", "last"],
  ["Examples", "root"],
  ["Canvas", "closed"],
  ["Panels", "closed"],
  ["Accelerator", "leaf"],
  ["AD", "leaf"],
  ["ADX", "leaf"],
  ["ADXW", "leaf"],
  ["Alligator", "leaf"],
  ["AMA", "leaf"],
];
const line = '<span class="guide"></span>';
const right = '<svg width="9" height="14"><path d="M1 1l6 6-6 6" fill="none" stroke="currentColor" stroke-width="2.600" /></svg>';

document.getElementById("tree").innerHTML = nodes
  .map(([label, kind]) => {
    let guides = line + line + `<span class="guide ${kind}"></span>`;
    if (kind === "root") guides = line + `<span class="guide fold">${svg("chev-down", 13, 10)}</span>`;
    if (kind === "closed") guides = line + line + `<span class="guide fold closed">${right}</span>`;
    const icon = kind === "root" || kind === "closed" ? svg("folder", 24, 20) : svg("indicator", 20, 18);
    return `<li>${guides}<span class="node-icon">${icon}</span>${label}</li>`;
  })
  .join("");

// Chart geometry
const LEFT = 359, TOP = 156, RIGHT = 1842, BOTTOM = 929, STEP = 16;

// candle: index, high, body top, body bottom, low, bearish
const candles = [
  [0, 322, 322, 325, 325, 1], [1, 289, 321, 328, 350, 1], [2, 223, 284, 326, 335, 0],
  [3, 272, 285, 298, 330, 1], [4, 247, 277, 296, 303, 0], [5, 230, 247, 276, 303, 0],
  [6, 203, 245, 275, 286, 1], [7, 233, 272, 386, 401, 1], [8, 269, 322, 350, 360, 0],
  [9, 287, 321, 350, 360, 0], [10, 294, 309, 350, 360, 0], [11, 306, 306, 350, 360, 1],
  [12, 322, 330, 350, 360, 0], [15, 282, 340, 350, 360, 0], [16, 294, 340, 350, 360, 0],
  [19, 299, 340, 350, 360, 0], [21, 304, 307, 350, 360, 0], [22, 247, 302, 307, 340, 0],
  [23, 265, 285, 303, 340, 0], [24, 173, 285, 305, 340, 1], [25, 242, 260, 305, 322, 0],
  [26, 216, 259, 303, 340, 1], [27, 301, 304, 350, 360, 1], [36, 600, 640, 660, 717, 0],
  [37, 600, 640, 660, 715, 1], [68, 511, 618, 658, 673, 1], [69, 571, 573, 653, 666, 0],
  [70, 566, 573, 726, 791, 1], [71, 697, 724, 773, 834, 1], [72, 745, 769, 810, 841, 1],
  [73, 739, 742, 810, 843, 0], [74, 655, 660, 744, 744, 0], [75, 653, 662, 680, 705, 1],
  [76, 628, 658, 679, 688, 0], [77, 640, 658, 667, 703, 1], [78, 581, 585, 670, 676, 0],
  [79, 579, 586, 620, 629, 1], [80, 591, 618, 640, 668, 1], [81, 593, 610, 637, 644, 0],
  [82, 529, 561, 611, 611, 0], [83, 474, 524, 563, 570, 0], [84, 509, 519, 551, 551, 1],
  [85, 516, 551, 578, 597, 1], [86, 529, 581, 653, 656, 1], [87, 537, 549, 652, 663, 0],
  [88, 474, 509, 546, 560, 0], [89, 448, 458, 508, 540, 0], [90, 438, 462, 506, 533, 1],
  [91, 475, 502, 507, 518, 0],
];

// tick volume bars, starting at index 1
const volumes = [
  45, 42, 32, 45, 31, 25, 54, 63, 28, 23, 60, 45, 32, 31, 27, 53, 34, 36, 34, 41, 36, 74, 74,
  75, 72, 75, 78, 74, 72, 58, 43, 38, 34, 34, 40, 51, 46, 39, 44, 49, 40, 41, 30, 26, 26, 16,
  24, 17, 12, 11, 12, 2, 6, 10, 8, 15, 24, 16, 16, 17, 14, 11, 18, 33, 38, 35, 32, 50, 37, 50,
  50, 50, 38, 29, 24, 27, 22, 20, 21, 27, 25, 30, 25, 30, 28, 39, 31, 41, 35, 39, 24,
];

const prices = [
  ["0.69370", 190], ["0.69330", 257], ["0.69290", 324], ["0.69250", 391], ["0.69210", 458],
  ["0.69170", 526], ["0.69130", 593], ["0.69090", 660], ["0.69050", 727], ["0.69010", 795],
  ["0.68970", 862],
];
const times = [
  "6 Apr 2026", "6 Apr 13:00", "6 Apr 15:00", "6 Apr 17:00", "6 Apr 19:00", "6 Apr 21:00",
  "6 Apr 23:00", "7 Apr 01:00", "7 Apr 03:00", "7 Apr 05:00", "7 Apr 07:00", "7 Apr 09:00",
];

const rect = (x, y, w, h, fill) => `<rect x="${x}" y="${y}" width="${w}" height="${h}" fill="${fill}" />`;
const dash = (x1, y1, x2, y2) =>
  `<line x1="${x1}" y1="${y1}" x2="${x2}" y2="${y2}" stroke="#778899" stroke-dasharray="3 3" />`;

let out = "";
prices.forEach(([label, y]) => {
  out += dash(LEFT, y + 0.5, RIGHT, y + 0.5);
  out += rect(RIGHT, y, 5, 1, "#fff");
  out += `<text x="1848" y="${y + 6}">${label}</text>`;
});
for (let x = 423; x < RIGHT; x += 64) out += dash(x + 0.5, TOP, x + 0.5, BOTTOM);

volumes.forEach((v, i) => {
  out += rect(LEFT + (i + 1) * STEP - 1, BOTTOM - v, 2, v, "#32cd32");
});
out += rect(LEFT, 502, RIGHT - LEFT, 1, "#778899");

candles.forEach(([i, high, top, bottom, low, bear]) => {
  const x = LEFT + i * STEP;
  const left = i === 0 ? x : x - 5;
  out += rect(x, high, 1, low - high, "#0f0");
  out += `<rect x="${left + 0.5}" y="${top + 0.5}" width="${x + 5 - left}" height="${bottom - top}" fill="${bear ? "#fff" : "#000"}" stroke="#0f0" />`;
});

// frame, price tag and time scale
out += rect(LEFT, TOP, RIGHT - LEFT, 1, "#fff") + rect(LEFT, BOTTOM, RIGHT - LEFT + 1, 1, "#fff");
out += rect(LEFT, TOP, 1, BOTTOM - TOP, "#fff") + rect(RIGHT, TOP, 1, BOTTOM - TOP, "#fff");
out += rect(1845, 494, 60, 17, "#778899") + '<text class="tag" x="1849" y="508">0.69184</text>';
times.forEach((label, i) => {
  const x = LEFT + i * 128;
  out += rect(x, BOTTOM, 1, 5, "#fff") + `<text class="caption" x="${x}" y="947">${label}</text>`;
});

// caption and its two buttons
out += `<g stroke-width="1.500"><path d="M367 164h11v15h-11z" fill="#ffd6d0" stroke="#dc3d35" /><path d="M378 164h10v15h-10z" fill="#b9e1ff" stroke="#0a5fa5" />
  <path d="M369 168h8M369 172h8M369 176h8" stroke="#dc3d35" /><path d="M379 168h8M379 172h8M379 176h8" stroke="#0a5fa5" />
  <path d="M399 164h6v6h4v9h-10z" fill="#ffd6d0" stroke="#dc3d35" /><path d="M420 164h-6v6h-3v9h9z" fill="#b9e1ff" stroke="#0a5fa5" />
  <rect x="406" y="163" width="7" height="4" fill="#ddd" /></g>
  <text class="caption" x="427" y="178">AUDUSD.a, M15:</text><text class="caption" x="539" y="178">Australian Dollar vs US Dollar</text>`;

document.getElementById("chart").innerHTML = out;
```
